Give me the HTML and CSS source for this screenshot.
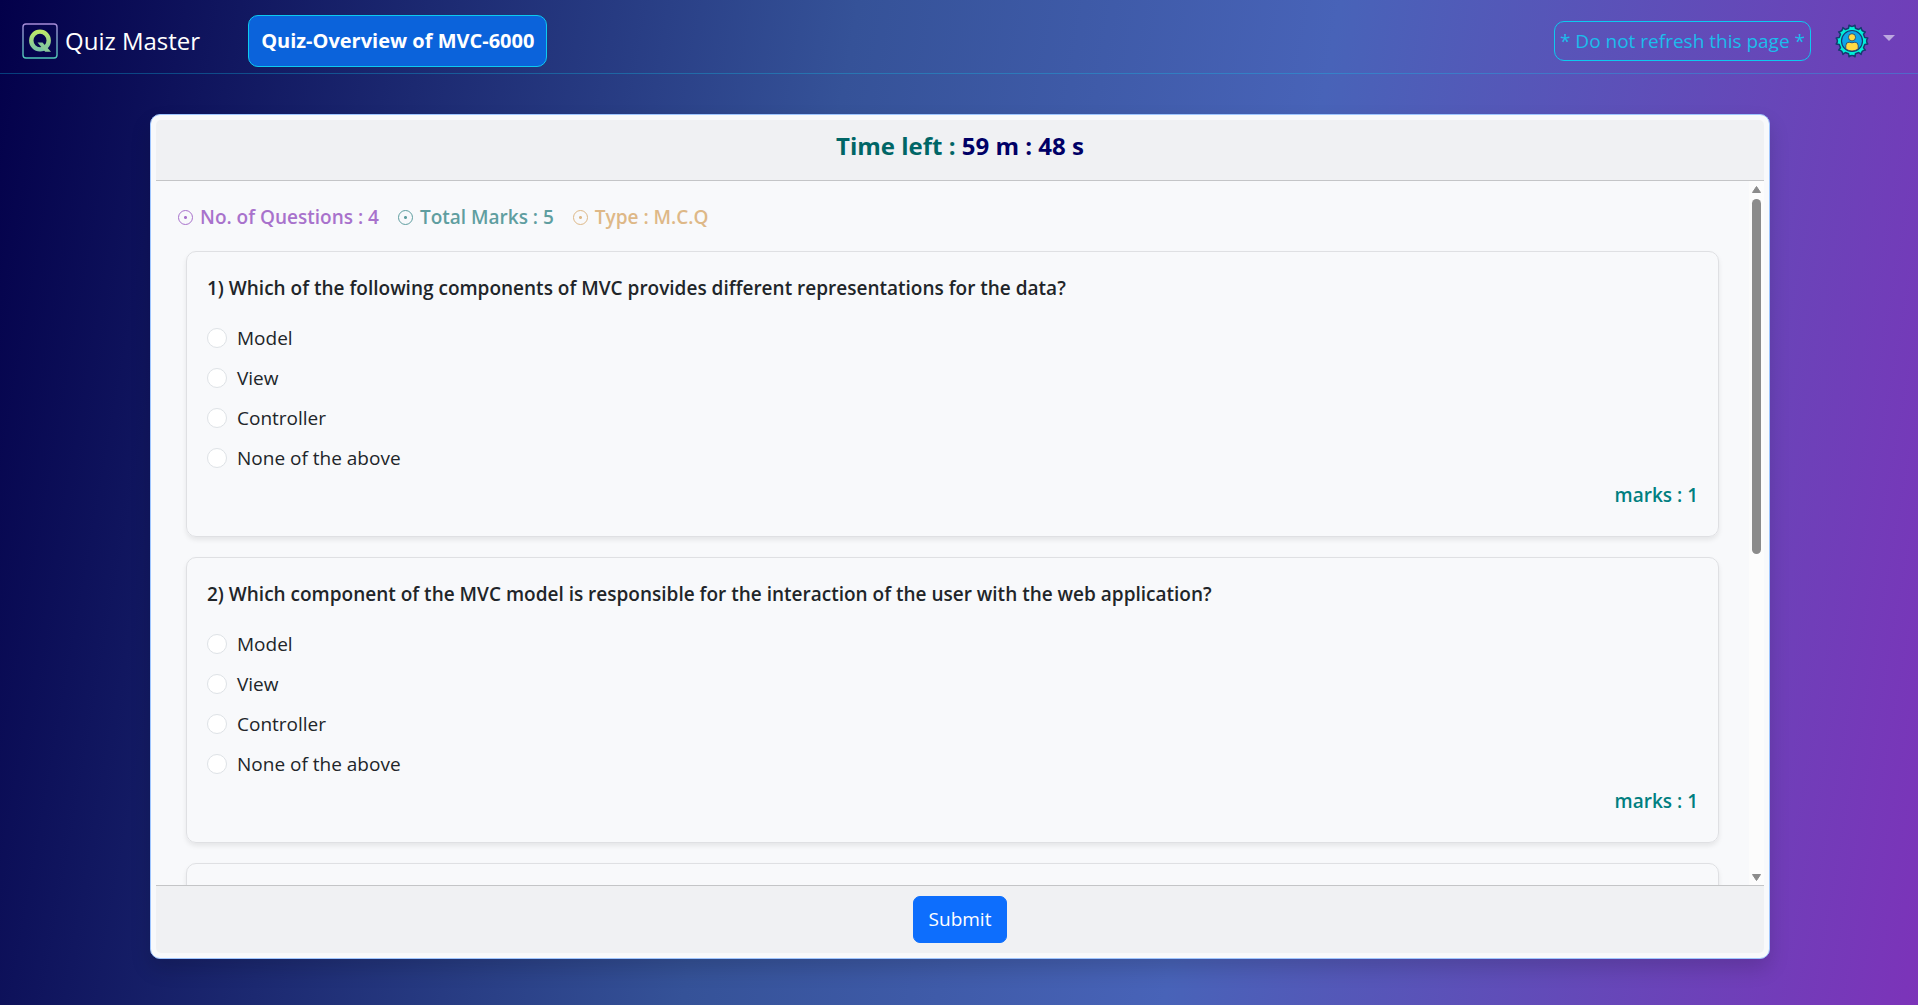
FILE: index.html
```html
<!DOCTYPE html>
<html lang="en">
<head>
<meta charset="utf-8">
<meta name="viewport" content="width=device-width, initial-scale=1">
<title>Quiz Master</title>
<link rel="stylesheet" href="styles.css">
</head>
<body>
<header class="navbar">
  <a class="brand" href="#">
    <svg class="brand-logo" viewBox="0 0 36 36" aria-hidden="true">
      <defs>
        <linearGradient id="frame" x1="0" y1="0" x2="0" y2="1"><stop offset="0" stop-color="#a78bd8"/><stop offset="1" stop-color="#4fc7b5"/></linearGradient>
        <linearGradient id="letter" x1="0" y1="0" x2="0" y2="1"><stop offset="0" stop-color="#bde86a"/><stop offset="1" stop-color="#7cc4a4"/></linearGradient>
      </defs>
      <rect x="1" y="1" width="34" height="34" rx="3" fill="none" stroke="url(#frame)" stroke-width="1.4"/>
      <ellipse cx="18" cy="17.500" rx="8.700" ry="8.900" fill="none" stroke="url(#letter)" stroke-width="4.400"/>
      <path d="M15.500 19.500h5l8.500 9.200h-5.800z" fill="#8acb98"/>
    </svg>
    <span>Quiz Master</span>
  </a>
  <h1 class="quiz-title">Quiz-Overview of MVC-6000</h1>
  <p class="notice">* Do not refresh this page *</p>
  <button class="account" type="button" aria-label="Account">
    <svg class="account-icon" viewBox="0 0 34 34" aria-hidden="true">
      <g fill="#00f0d8" stroke="#173a70" stroke-width="1.500" stroke-linejoin="round">
        <path d="M13.600 4.200 14 1.200 Q17 3.600 20 1.200 L20.400 4.200 23.700 5.500 26.100 3.600 Q26.500 7.500 30.400 7.900 L28.500 10.300 29.800 13.600 32.800 14 Q30.400 17 32.800 20 L29.800 20.400 28.500 23.700 30.400 26.100 Q26.500 26.500 26.100 30.400 L23.700 28.500 20.400 29.800 20 32.800 Q17 30.400 14 32.800 L13.600 29.800 10.300 28.500 7.900 30.400 Q7.500 26.500 3.600 26.100 L5.500 23.700 4.200 20.400 1.200 20 Q3.600 17 1.200 14 L4.200 13.600 5.500 10.300 3.600 7.900 Q7.500 7.500 7.900 3.600 L10.300 5.500Z"/>
      </g>
      <circle cx="17" cy="17" r="10.500" fill="#0da6e8" stroke="#173a70" stroke-width="1.200"/>
      <g fill="#ffda44" stroke="#173a70" stroke-width="0.800">
        <circle cx="17" cy="13.300" r="3.600"/>
        <path d="M10.800 25v-3.200q0-3.600 3.300-3.600 2.900 1.200 5.800 0 3.300 0 3.300 3.600V25q-6.200 4-12.400 0z"/>
      </g>
    </svg>
    <span class="caret"></span>
  </button>
</header>

<main class="page">
  <form class="quiz">
    <div class="quiz-head"><h2 class="timer">Time left : <span class="timer-value">59 m : 48 s</span></h2></div>
    <div class="quiz-main">
      <div class="quiz-body">
        <ul class="facts">
          <li class="fact fact-count"><span class="dot"></span>No. of Questions : 4</li>
          <li class="fact fact-marks"><span class="dot"></span>Total Marks : 5</li>
          <li class="fact fact-type"><span class="dot"></span>Type : M.C.Q</li>
        </ul>
        <fieldset class="question">
          <legend class="question-text">1) Which of the following components of MVC provides different representations for the data?</legend>
          <label class="option"><input type="radio" name="q1">Model</label>
          <label class="option"><input type="radio" name="q1">View</label>
          <label class="option"><input type="radio" name="q1">Controller</label>
          <label class="option"><input type="radio" name="q1">None of the above</label>
          <p class="marks">marks : 1</p>
        </fieldset>
        <fieldset class="question">
          <legend class="question-text">2) Which component of the MVC model is responsible for the interaction of the user with the web application?</legend>
          <label class="option"><input type="radio" name="q2">Model</label>
          <label class="option"><input type="radio" name="q2">View</label>
          <label class="option"><input type="radio" name="q2">Controller</label>
          <label class="option"><input type="radio" name="q2">None of the above</label>
          <p class="marks">marks : 1</p>
        </fieldset>
        <fieldset class="question"></fieldset>
        <fieldset class="question"></fieldset>
      </div>
      <div class="scrollbar" aria-hidden="true">
        <svg class="scroll-arrow" viewBox="0 0 9 7"><path d="M4.500 0.500 8.500 6.500h-8z"/></svg>
        <div class="scroll-track"><div class="scroll-thumb"></div></div>
        <svg class="scroll-arrow" viewBox="0 0 9 7"><path d="M4.500 6.500 8.500 0.500h-8z"/></svg>
      </div>
    </div>
    <div class="quiz-foot"><button class="submit" type="submit">Submit</button></div>
  </form>
</main>
</body>
</html>
```
FILE: styles.css
```css
* { box-sizing: border-box; }

body {
  display: flex;
  flex-direction: column;
  height: 100vh;
  margin: 0;
  color: #212529;
  font: 19px/30px "Segoe UI", "Open Sans", "Noto Sans", sans-serif;
  background: linear-gradient(100deg, #03004a 0%, #355298 41%, #4863b8 64%, #7c33b9 100%);
}

h1, h2, p, ul { margin: 0; padding: 0; }

.navbar {
  display: flex;
  align-items: center;
  height: 74px;
  padding: 15px 23px 6px 22px;
  border-bottom: 1px solid rgba(13, 202, 240, 0.3);
}

.brand {
  display: flex;
  align-items: center;
  gap: 7px;
  color: #fff;
  font-size: 24px;
  text-decoration: none;
}

.brand-logo { width: 36px; height: 36px; }

.quiz-title {
  margin-left: 48px;
  padding: 10px 12px;
  border: 1px solid #0dcaf0;
  border-radius: 10px;
  background: #0b63db;
  color: #fff;
  font-size: 20px;
  font-weight: 700;
  line-height: 30px;
}

.notice {
  margin-left: auto;
  padding: 4px 5px;
  border: 1px solid #0dcaf0;
  border-radius: 10px;
  color: #1bbdec;
}

.account {
  display: flex;
  align-items: center;
  gap: 14px;
  margin-left: 24px;
  padding: 0;
  border: 0;
  background: none;
}

.account-icon { width: 34px; height: 34px; }

.caret {
  margin-bottom: 6px;
  border: 6px solid transparent;
  border-top-color: #bca8e0;
  border-bottom: 0;
}

.page {
  display: flex;
  flex: 1;
  min-height: 0;
  padding: 40px 148px 46px 150px;
}

.quiz {
  display: flex;
  flex: 1;
  flex-direction: column;
  padding: 5px;
  border: 1px solid #9ec5fe;
  border-radius: 10px;
  background: #f8f9fb;
  box-shadow: 0 10px 20px rgba(0, 0, 0, 0.15);
}

.quiz-head {
  height: 61px;
  padding: 10px 20px;
  border-bottom: 1px solid #c4c5c7;
  border-radius: 5px 5px 0 0;
  background: #f0f1f3;
  text-align: center;
}

.timer {
  color: #006666;
  font-size: 24px;
  font-weight: 700;
  line-height: 32px;
}

.timer-value { color: #000066; }

.quiz-main {
  display: flex;
  flex: 1;
  min-height: 0;
}

.quiz-body {
  flex: 1;
  padding: 21px 30px 0;
  overflow-y: auto;
  scrollbar-width: none;
}

.scrollbar {
  display: flex;
  flex-direction: column;
  align-items: center;
  gap: 6px;
  width: 15px;
  padding: 5px 0 4px;
  background: #fcfcfc;
}

.scroll-arrow {
  width: 9px;
  height: 7px;
  fill: #8b8b8b;
  stroke: #8b8b8b;
  stroke-linejoin: round;
}

.scroll-track {
  flex: 1;
  width: 9px;
}

.scroll-thumb {
  height: 53%;
  border-radius: 5px;
  background: #8b8b8b;
}

.facts {
  display: flex;
  gap: 19px;
  margin: 0 0 19px -8px;
  list-style: none;
  font-weight: 600;
}

.fact {
  display: flex;
  align-items: center;
  gap: 7px;
}

.fact-count { color: #a872cc; }
.fact-marks { color: #5f9ea0; }
.fact-type { color: #deb887; }

.dot {
  width: 15px;
  height: 15px;
  border: 1px solid currentColor;
  border-radius: 50%;
  background: radial-gradient(circle, currentColor 1px, transparent 2px);
}

.question {
  min-width: 0;
  min-height: 286px;
  margin: 0 0 20px;
  padding: 21px 20px 20px;
  border: 1px solid #dfe0e3;
  border-radius: 10px;
  background: #f8f9fb;
  box-shadow: 0 3px 5px rgba(0, 0, 0, 0.08);
}

.question-text {
  float: left;
  width: 100%;
  margin-bottom: 20px;
  padding: 0;
  color: #212529;
  font-weight: 600;
}

.option {
  display: flex;
  clear: both;
  align-items: center;
  gap: 10px;
  margin-bottom: 10px;
}

.option:last-of-type { margin-bottom: 7px; }

.option input {
  width: 20px;
  height: 20px;
  margin: 0;
  border: 1px solid #dee2e6;
  border-radius: 50%;
  background: #fff;
  appearance: none;
}

.option input:checked { border: 6px solid #0d6efd; }

.marks {
  color: #007f80;
  font-weight: 600;
  text-align: right;
}

.quiz-foot {
  padding: 10px;
  border-top: 1px solid #c4c5c7;
  border-radius: 0 0 5px 5px;
  background: #f0f1f3;
  text-align: center;
}

.submit {
  display: block;
  margin: 0 auto;
  padding: 8px 15px;
  border: 1px solid #0d6efd;
  border-radius: 7px;
  background: #0d6efd;
  color: #fff;
  font: inherit;
  line-height: 29px;
}
```
